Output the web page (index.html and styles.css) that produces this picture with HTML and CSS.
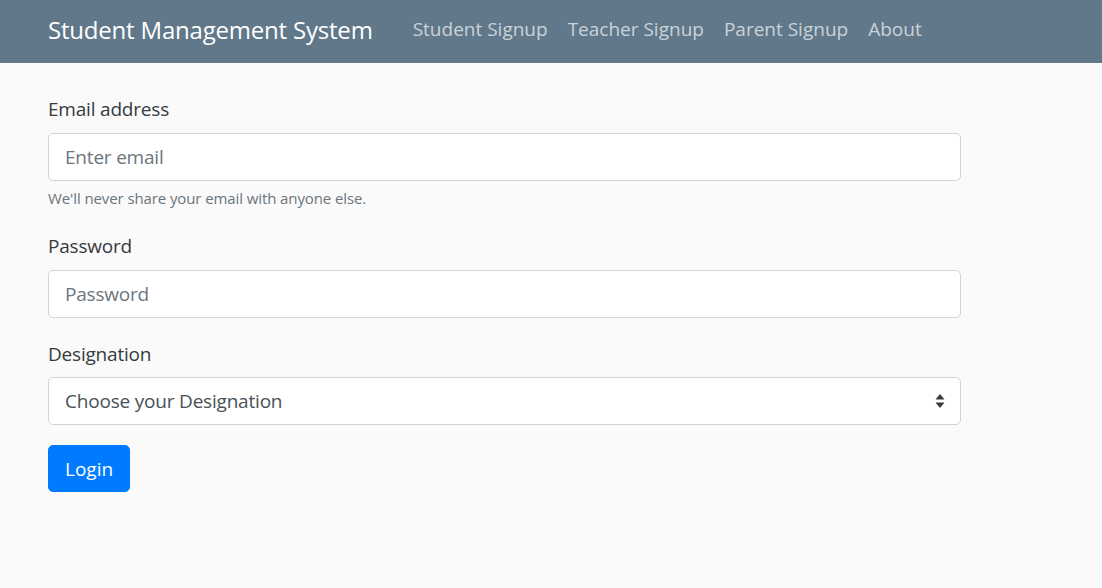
FILE: index.html
```html
<!DOCTYPE html>
<html lang="en">
<head>
<meta charset="utf-8">
<title>Student Management System</title>
<link rel="stylesheet" href="styles.css">
</head>
<body>
<nav class="navbar">
  <a class="brand" href="#">Student Management System</a>
  <ul class="nav-links">
    <li><a href="#">Student Signup</a></li>
    <li><a href="#">Teacher Signup</a></li>
    <li><a href="#">Parent Signup</a></li>
    <li><a href="#">About</a></li>
  </ul>
</nav>
<main class="container">
  <form class="login-form">
    <div class="form-group has-help">
      <label class="label" for="email">Email address</label>
      <input class="control" id="email" type="email" placeholder="Enter email">
      <small class="help">We'll never share your email with anyone else.</small>
    </div>
    <div class="form-group pwd-group">
      <label class="label" for="pwd">Password</label>
      <input class="control" id="pwd" type="password" placeholder="Password">
    </div>
    <div class="form-group">
      <label class="label" for="des">Designation</label>
      <div class="select-wrap">
        <select class="control select" id="des">
          <option>Choose your Designation</option>
          <option>Student</option>
          <option>Teacher</option>
          <option>Parent</option>
        </select>
        <svg class="arrows" width="10" height="16" viewBox="0 0 10 16"><path d="M5 1 L9.5 6.5 H0.5 Z M5 15 L9.5 9.5 H0.5 Z" fill="#343a40"/></svg>
      </div>
    </div>
    <button class="btn" type="button">Login</button>
  </form>
</main>
</body>
</html>
```
FILE: styles.css
```css
* { box-sizing: border-box; }
html, body { margin: 0; padding: 0; }
body {
  background: #fafafa;
  font-family: "Open Sans", "Noto Sans", sans-serif;
  color: #212529;
  font-size: 20px;
  line-height: 1.5;
}
.navbar {
  height: 63px;
  background: #607889;
  display: flex;
  align-items: center;
  padding: 0 48px 4px;
}
.brand {
  color: #fff;
  text-decoration: none;
  font-size: 24px;
  margin-right: 30px;
  letter-spacing: -0.2px;
}
.nav-links {
  list-style: none;
  display: flex;
  margin: 0;
  padding: 0;
}
.nav-links a {
  display: block;
  padding: 0 10px;
  color: #cbd2d8;
  text-decoration: none;
  font-size: 19px;
  letter-spacing: 0;
}
.container {
  padding: 32px 48px 30px;
}
.login-form {
  width: 913px;
}
.form-group {
  margin-bottom: 20px;
}
.form-group.has-help {
  margin-bottom: 23px;
}
.form-group.pwd-group {
  margin-bottom: 22px;
}
.label {
  display: block;
  margin-bottom: 9px;
  color: #343a40;
  letter-spacing: -0.2px;
  font-size: 19px;
}
.control {
  display: block;
  width: 100%;
  height: 48px;
  padding: 0 16px;
  font-family: inherit;
  font-size: 19px;
  color: #495057;
  background: #fff;
  border: 1px solid #ced4da;
  border-radius: 5px;
  letter-spacing: -0.2px;
}
.control::placeholder { color: #6c757d; }
.select-wrap { position: relative; }
.select {
  appearance: none;
  -webkit-appearance: none;
}
.arrows {
  position: absolute;
  right: 16px;
  top: 16px;
  pointer-events: none;
}
.help {
  display: block;
  margin-top: 6px;
  font-size: 15px;
  color: #6c757d;
  letter-spacing: -0.1px;
}
.btn {
  height: 47px;
  padding: 0 16px;
  font-family: inherit;
  font-size: 19px;
  color: #fff;
  background: #007bff;
  border: 1px solid #007bff;
  border-radius: 5px;
}
```
